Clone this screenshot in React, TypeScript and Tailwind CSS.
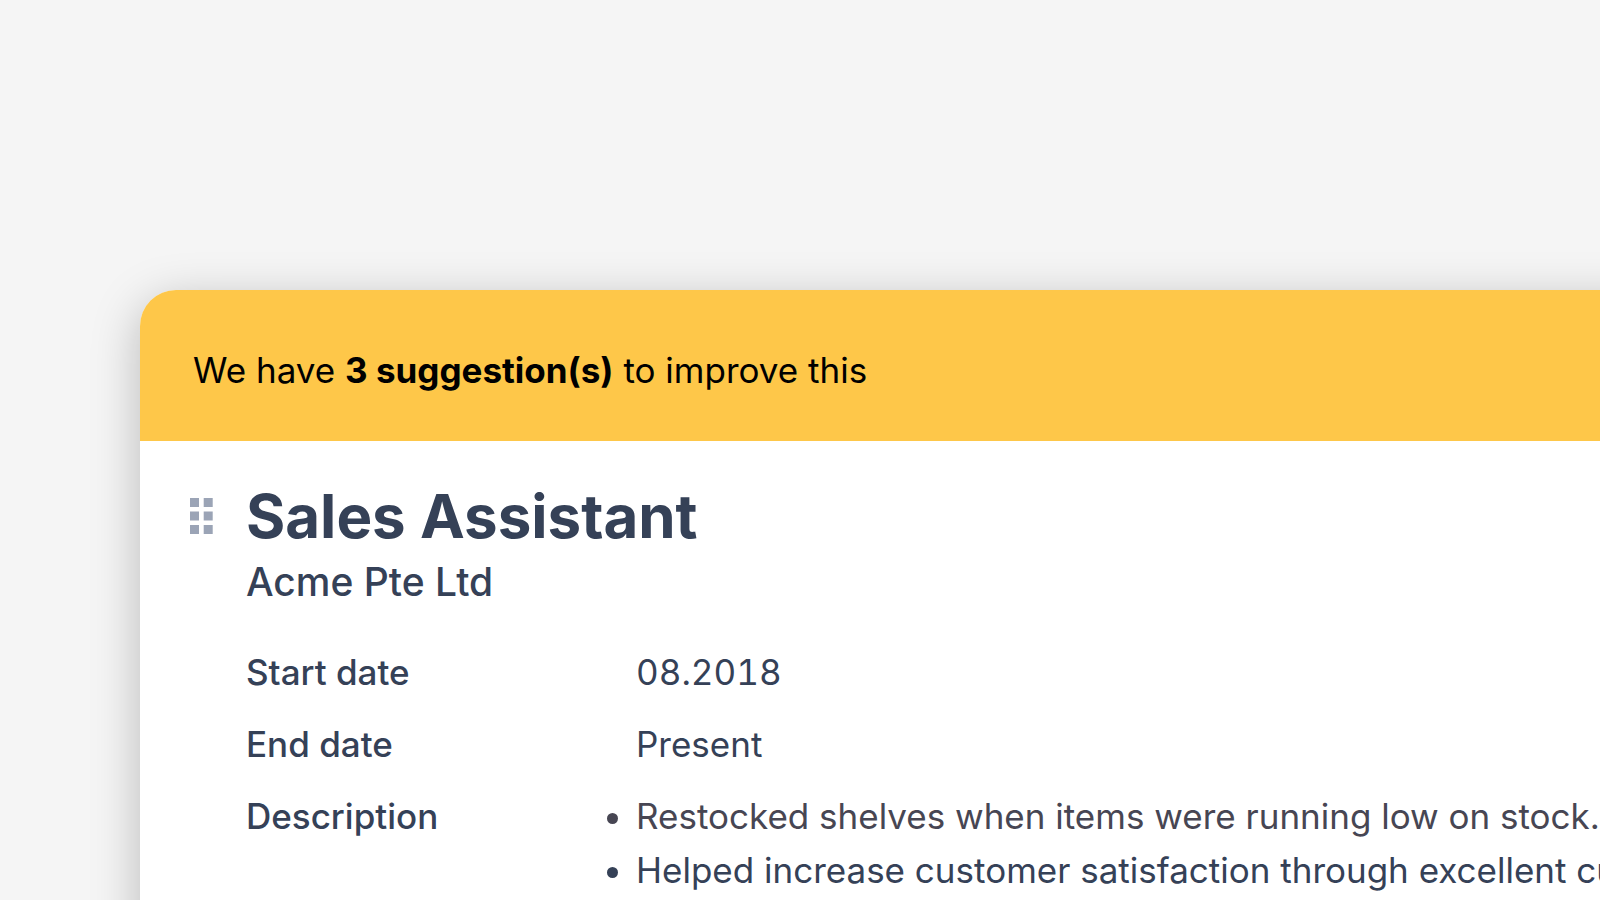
const duties = [
  { text: "Restocked shelves when items were running low on stock.", color: "text-[#474653]" },
  { text: "Helped increase customer satisfaction through excellent customer service.", color: "text-[#354157]" },
];

const dates = [
  ["Start date", "08.2018"],
  ["End date", "Present"],
];

function DragHandle() {
  return (
    <button type="button" aria-label="Reorder position" className="mt-[18px] shrink-0 self-start">
      <svg className="block" width="23" height="36" viewBox="0 0 23 36" fill="#9ba4b6" aria-hidden="true">
        {[0, 13.5, 27].map((y) => (
          <g key={y}>
            <rect x="0" y={y} width="9" height="9" />
            <rect x="13.7" y={y} width="9" height="9" />
          </g>
        ))}
      </svg>
    </button>
  );
}

function SuggestionBanner() {
  return (
    <div className="bg-[#fec749] pt-[53px] pr-12 pb-11 pl-[53px] text-[35px] leading-[54px] text-black">
      <p>
        We have <strong className="font-bold">3 suggestion(s)</strong> to improve this
      </p>
    </div>
  );
}

export default function App() {
  return (
    <main className="flex h-screen flex-col overflow-hidden bg-[#f5f5f5] pt-[290px] pl-[140px] font-['Inter',sans-serif]">
      <article className="-mr-20 -mb-20 flex-1 rounded-tl-[36px] bg-white text-[#354157] shadow-[0_12px_48px_rgba(0,0,0,0.25)]">
        <div className="overflow-hidden rounded-tl-[36px]">
          <SuggestionBanner />
        </div>
        <div className="flex gap-[33px] pt-[39px] pl-[50px]">
          <DragHandle />
          <div className="min-w-0 flex-1">
            <h1 className="text-[60px] leading-[72px] font-bold">Sales Assistant</h1>
            <p className="text-[39px] leading-[60px] font-medium">Acme Pte Ltd</p>
            <dl className="mt-[33px] grid grid-cols-[390px_1fr] gap-y-[18px] text-[35px] leading-[54px]">
              {dates.map(([label, value]) => (
                <div key={label} className="contents">
                  <dt className="font-medium">{label}</dt>
                  <dd className="tabular-nums">{value}</dd>
                </div>
              ))}
              <dt className="font-medium">Description</dt>
              <dd>
                <ul className="list-disc whitespace-nowrap">
                  {duties.map((duty) => (
                    <li key={duty.text} className={duty.color}>{duty.text}</li>
                  ))}
                </ul>
              </dd>
            </dl>
          </div>
        </div>
      </article>
    </main>
  );
}
